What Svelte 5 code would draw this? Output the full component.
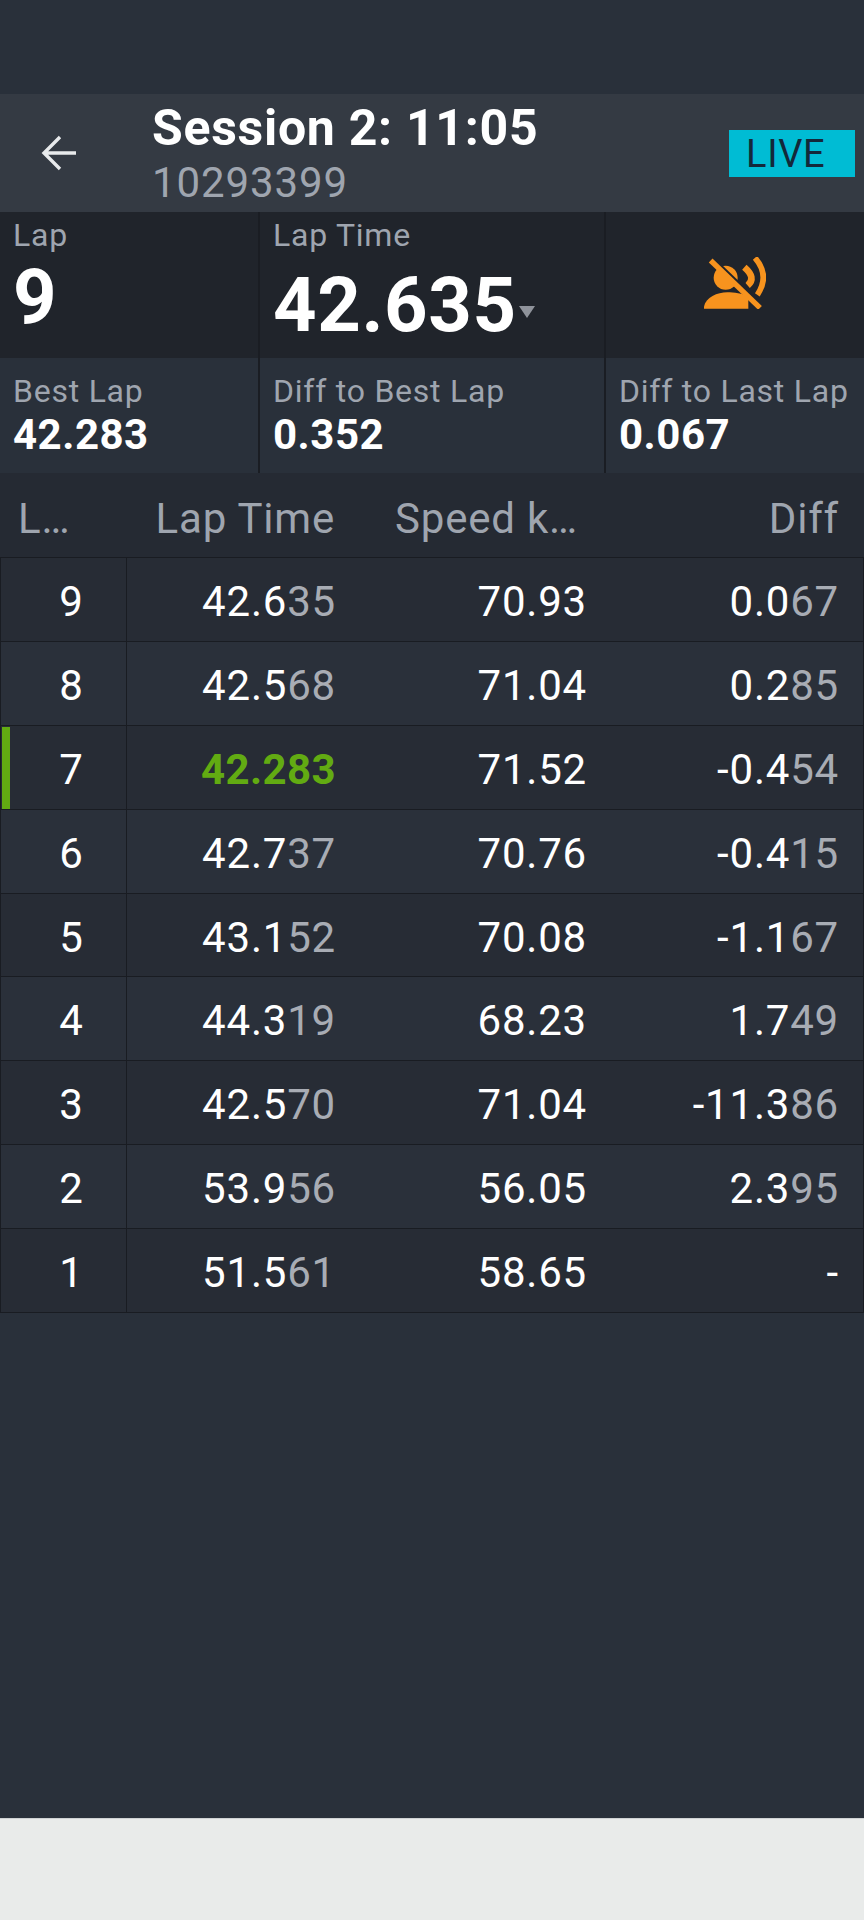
<script>
	const laps = [
		{ lap: 9, time: ["42.6", "35"], speed: "70.93", diff: ["0.0", "67"] },
		{ lap: 8, time: ["42.5", "68"], speed: "71.04", diff: ["0.2", "85"] },
		{ lap: 7, time: ["42.283", ""], speed: "71.52", diff: ["-0.4", "54"], best: true },
		{ lap: 6, time: ["42.7", "37"], speed: "70.76", diff: ["-0.4", "15"] },
		{ lap: 5, time: ["43.1", "52"], speed: "70.08", diff: ["-1.1", "67"] },
		{ lap: 4, time: ["44.3", "19"], speed: "68.23", diff: ["1.7", "49"] },
		{ lap: 3, time: ["42.5", "70"], speed: "71.04", diff: ["-11.3", "86"] },
		{ lap: 2, time: ["53.9", "56"], speed: "56.05", diff: ["2.3", "95"] },
		{ lap: 1, time: ["51.5", "61"], speed: "58.65", diff: ["-", ""] }
	];
</script>

<div class="screen">
	<div class="status"></div>

	<header class="header">
		<button class="back" aria-label="Back">
			<svg width="36" height="36" viewBox="0 0 36 36" fill="none" stroke="#e8eaec" stroke-width="3.4">
				<path d="M35 18H3M19 2L3 18l16 16" />
			</svg>
		</button>
		<div class="titles">
			<div class="title">Session 2: 11:05</div>
			<div class="subtitle">10293399</div>
		</div>
		<div class="live">LIVE</div>
	</header>

	<section class="stats dark">
		<div class="stat">
			<div class="label">Lap</div>
			<div class="big">9</div>
		</div>
		<div class="stat">
			<div class="label">Lap Time</div>
			<div class="big time">42.635<span class="caret"></span></div>
		</div>
		<div class="stat icon-cell">
			<svg width="62" height="52" viewBox="0 0 186 155">
				<circle cx="65" cy="62" r="36" fill="#f7931e" />
				<path fill="#f7931e" d="M0 155V148C5 120 40 105 70 105C90 105 115 108 133 118V155Z" />
				<path fill="none" stroke="#f7931e" stroke-width="20" d="M121 30Q158 62 131 85" />
				<path fill="none" stroke="#f7931e" stroke-width="17" d="M153 2Q199 55 160 113" />
				<path fill="none" stroke="#20242b" stroke-width="8" d="M27 3L175 145" />
				<path fill="none" stroke="#f7931e" stroke-width="16" d="M20 10L168 152" />
			</svg>
		</div>
	</section>

	<section class="stats">
		<div class="stat">
			<div class="label">Best Lap</div>
			<div class="mid">42.283</div>
		</div>
		<div class="stat">
			<div class="label">Diff to Best Lap</div>
			<div class="mid">0.352</div>
		</div>
		<div class="stat">
			<div class="label">Diff to Last Lap</div>
			<div class="mid">0.067</div>
		</div>
	</section>

	<div class="thead">
		<div class="th lap-col">L…</div>
		<div class="th">Lap Time</div>
		<div class="th speed-th">Speed k…</div>
		<div class="th">Diff</div>
	</div>

	<div class="tbody">
		{#each laps as row}
			<div class="tr" class:best={row.best}>
				<div class="td lap-col">{row.lap}</div>
				<div class="td" class:green={row.best}>{row.time[0]}<span class="dim">{row.time[1]}</span></div>
				<div class="td">{row.speed}</div>
				<div class="td">{row.diff[0]}<span class="dim">{row.diff[1]}</span></div>
			</div>
		{/each}
	</div>

	<div class="spacer"></div>
	<div class="navbar"></div>
</div>

<style>
	:global(body) {
		margin: 0;
		background: #29303a;
	}

	.screen {
		width: 864px;
		height: 1920px;
		display: flex;
		flex-direction: column;
		background: #29303a;
		font-family: Roboto, "Liberation Sans", sans-serif;
		color: #fff;
		overflow: hidden;
	}

	.status {
		height: 94px;
	}

	.header {
		height: 118px;
		display: flex;
		align-items: center;
		background: #343a43;
	}

	.back {
		width: 152px;
		padding: 0 0 0 41px;
		border: none;
		background: none;
		display: flex;
		align-items: center;
	}

	.titles {
		flex: 1;
	}

	.title {
		font-size: 50px;
		line-height: 60px;
		font-weight: 700;
		letter-spacing: 0.7px;
	}

	.subtitle {
		font-size: 42px;
		line-height: 50px;
		letter-spacing: 0.9px;
		color: #9fa5af;
	}

	.live {
		width: 126px;
		height: 47px;
		margin: 0 9px 0 0;
		padding-left: 17px;
		box-sizing: border-box;
		background: #00bcd4;
		color: #13293a;
		font-size: 38px;
		line-height: 49px;
		letter-spacing: 0.7px;
	}

	.stats {
		display: grid;
		grid-template-columns: 260px 346px 258px;
		height: 115px;
	}

	.stats.dark {
		height: 146px;
		background: #20242b;
	}

	.stat {
		padding: 5px 0 0 13px;
		box-sizing: border-box;
		border-right: 2px solid #1a1d23;
	}

	.stat:last-child {
		border-right: none;
	}

	.label {
		font-size: 32px;
		line-height: 36px;
		letter-spacing: 0.76px;
		color: #9fa5af;
	}

	.big {
		font-size: 76px;
		line-height: 80px;
		font-weight: 700;
		letter-spacing: 0.6px;
		margin-top: 4px;
	}

	.time {
		display: flex;
		align-items: flex-end;
		margin-top: 12px;
	}

	.caret {
		width: 0;
		height: 0;
		margin: 0 0 27px 2px;
		border-left: 8px solid transparent;
		border-right: 8px solid transparent;
		border-top: 12px solid #8f939b;
	}

	.icon-cell {
		display: flex;
		align-items: center;
		justify-content: center;
		padding: 0 0 4px;
	}

	.mid {
		font-size: 42px;
		line-height: 46px;
		font-weight: 700;
		letter-spacing: 0.5px;
		margin-top: 3px;
	}

	.stats:not(.dark) .stat {
		padding-top: 15px;
	}

	.thead,
	.tr {
		display: grid;
		grid-template-columns: 126px 209px 251px 276px;
	}

	.thead {
		height: 85px;
		align-items: center;
		background: #252a33;
		box-sizing: border-box;
		padding-top: 6px;
		border-bottom: 1px solid #191c22;
	}

	.th {
		font-size: 42px;
		letter-spacing: 0.8px;
		color: #9fa5af;
		text-align: right;
	}

	.speed-th {
		padding-right: 8px;
	}

	.th:last-child {
		padding-right: 23px;
	}

	.td:last-child {
		padding-right: 24px;
	}

	.thead .lap-col {
		text-align: left;
		padding-left: 18px;
	}

	.tbody {
		border-left: 1px solid #191c22;
		border-right: 1px solid #191c22;
	}

	.tr {
		height: 83.9px;
		box-sizing: border-box;
		border-bottom: 1.5px solid #191c22;
		position: relative;
		background: #2a303a;
	}

	.tr:nth-child(odd) {
		background: #272c35;
	}

	.td {
		font-size: 42px;
		letter-spacing: 0.8px;
		text-align: right;
		line-height: 76px;
		padding-top: 6px;
		min-width: 0;
	}

	.td.lap-col {
		text-align: center;
		padding-left: 16px;
		box-sizing: border-box;
		border-right: 1.5px solid #191c22;
	}

	.best::before {
		content: "";
		position: absolute;
		left: 1px;
		top: 1px;
		bottom: 0;
		width: 8px;
		background: #62ab12;
	}

	.dim {
		color: #a8acb4;
	}

	.green {
		color: #62ab12;
		font-weight: 700;
		letter-spacing: 0.4px;
	}

	.spacer {
		flex: 1;
	}

	.navbar {
		height: 101px;
		background: #e9ebea;
		border-top: 1px solid #cfd2d3;
	}
</style>
